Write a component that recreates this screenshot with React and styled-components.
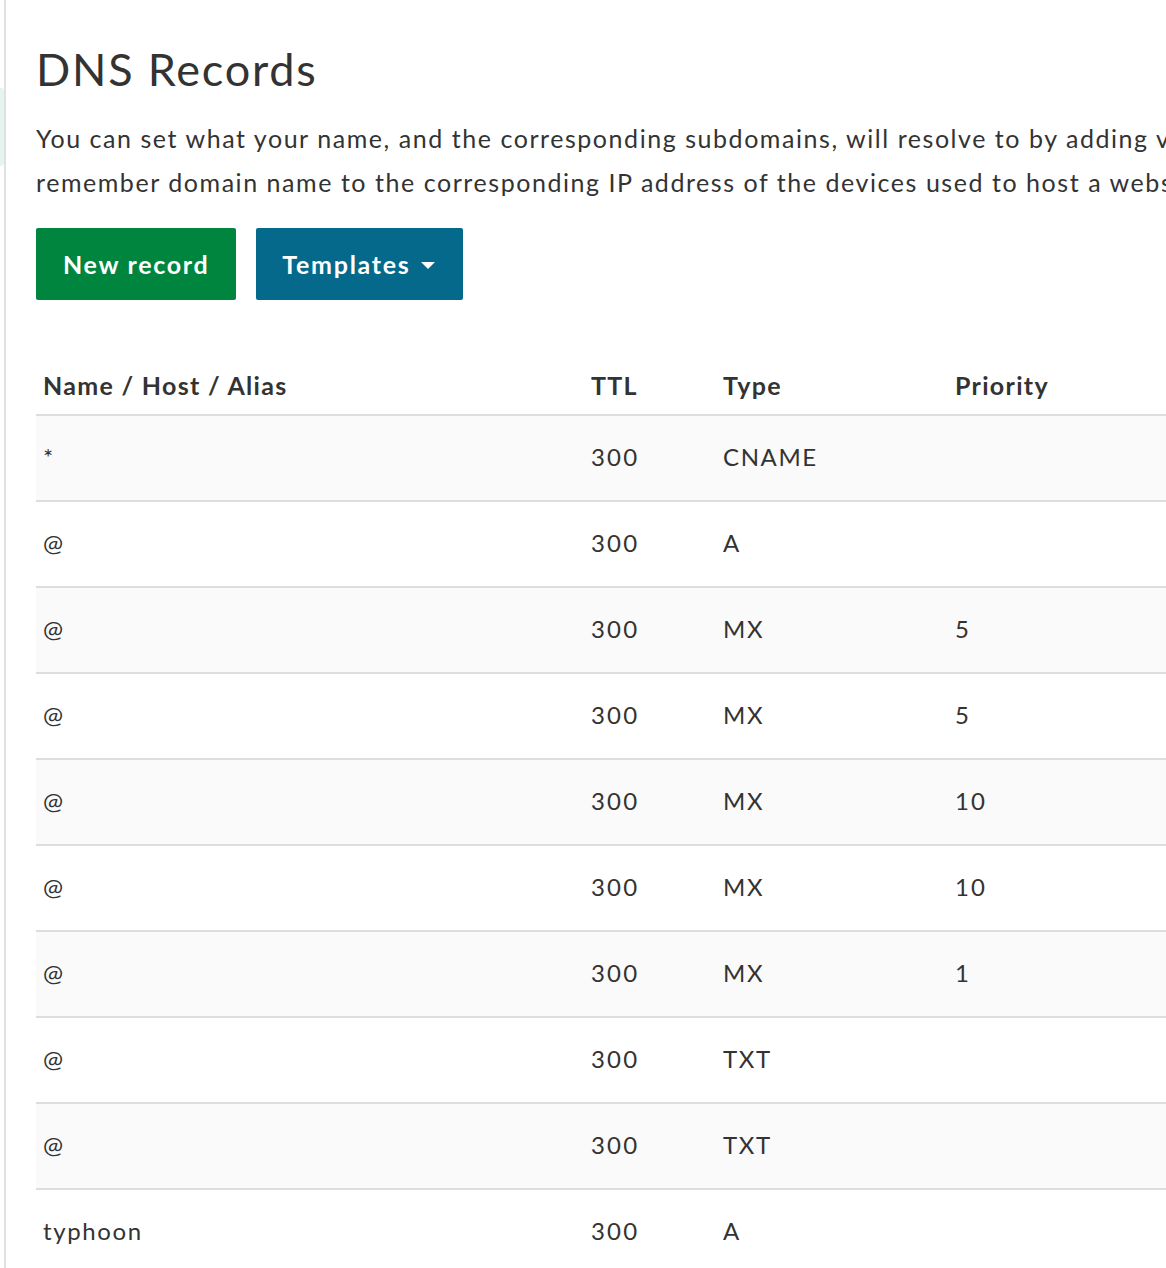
import React from 'react';
import styled, { createGlobalStyle } from 'styled-components';

const GlobalStyle = createGlobalStyle`
    html, body {
        margin: 0;
        padding: 0;
        background: #fff;
        overflow: hidden;
    }

    body {
        font-family: Lato, "Open Sans", sans-serif;
        color: #333;
        letter-spacing: 1.6px;
    }
`;

const Page = styled.div`
    display: flex;
    min-height: 1268px;
    width: 1500px;
`;

const Sidebar = styled.div`
    width: 4px;
    padding-top: 88px;
    border-right: 2px solid #e0e0e0;
    flex-shrink: 0;
`;

const ActiveItem = styled.div`
    height: 78px;
    background-color: #e6f4ee;
    border-radius: 0 3px 3px 0;
`;

const Main = styled.div`
    flex: 1;
    padding: 40px 0 0 30px;
`;

const Title = styled.h1`
    margin: 0 0 18px;
    font-size: 45px;
    font-weight: 400;
    line-height: 58px;
    letter-spacing: 1.8px;
    color: #333;
`;

const Intro = styled.p`
    margin: 0;
    font-size: 25px;
    line-height: 44px;
    letter-spacing: 1.55px;
    white-space: nowrap;
    color: #333;
`;

const Actions = styled.div`
    display: flex;
    gap: 20px;
    margin-top: 24px;
`;

const Button = styled.button`
    display: flex;
    align-items: center;
    gap: 11px;
    height: 72px;
    padding: 0 ${(p) => (p.$variant === 'blue' ? '28px 0 26px' : '27px')};
    border: none;
    border-radius: 2px;
    background-color: ${(p) => (p.$variant === 'blue' ? '#04698a' : '#00853f')};
    color: #fff;
    font-family: inherit;
    font-size: 25px;
    font-weight: 700;
    letter-spacing: 1.7px;
    cursor: pointer;
`;

const Caret = styled.span`
    width: 0;
    height: 0;
    border-left: 7px solid transparent;
    border-right: 7px solid transparent;
    border-top: 7px solid #fff;
    margin-top: 3px;
`;

const Table = styled.table`
    margin-top: 56px;
    width: 1300px;
    table-layout: fixed;
    border-collapse: collapse;
    font-size: 24px;
`;

const HeadCell = styled.th`
    text-align: left;
    font-size: 25px;
    font-weight: 700;
    letter-spacing: 1.3px;
    height: 58px;
    padding: 0 7px;
    vertical-align: middle;
    border-bottom: 2px solid #dddddd;
    width: ${(p) => p.$w || 'auto'};
`;

const Row = styled.tr`
    background-color: ${(p) => (p.$striped ? '#fafafa' : '#fff')};
    border-bottom: 2px solid #dddddd;
`;

const Cell = styled.td`
    height: 80px;
    padding: 0 7px 4px;
    vertical-align: middle;
    font-weight: 400;
    letter-spacing: ${(p) => (p.$wide ? '2.2px' : 'inherit')};
`;

const records = [
    { name: '*', ttl: 300, type: 'CNAME', priority: '' },
    { name: '@', ttl: 300, type: 'A', priority: '' },
    { name: '@', ttl: 300, type: 'MX', priority: 5 },
    { name: '@', ttl: 300, type: 'MX', priority: 5 },
    { name: '@', ttl: 300, type: 'MX', priority: 10 },
    { name: '@', ttl: 300, type: 'MX', priority: 10 },
    { name: '@', ttl: 300, type: 'MX', priority: 1 },
    { name: '@', ttl: 300, type: 'TXT', priority: '' },
    { name: '@', ttl: 300, type: 'TXT', priority: '' },
    { name: 'typhoon', ttl: 300, type: 'A', priority: '' },
];

export default function App() {
    return (
        <>
            <GlobalStyle />
            <Page>
                <Sidebar>
                    <ActiveItem />
                </Sidebar>

                <Main>
                    <Title>DNS Records</Title>

                    <Intro>
                        You can set what your name, and the corresponding subdomains, will resolve to by adding values below. DNS maps an easy to
                        <br />
                        remember domain name to the corresponding IP address of the devices used to host a website.
                    </Intro>

                    <Actions>
                        <Button>New record</Button>
                        <Button $variant="blue">
                            Templates
                            <Caret />
                        </Button>
                    </Actions>

                    <Table>
                        <thead>
                            <tr>
                                <HeadCell $w="534px">Name / Host / Alias</HeadCell>
                                <HeadCell $w="118px">TTL</HeadCell>
                                <HeadCell $w="218px">Type</HeadCell>
                                <HeadCell>Priority</HeadCell>
                            </tr>
                        </thead>
                        <tbody>
                            {records.map((r, i) => (
                                <Row key={i} $striped={i % 2 === 0}>
                                    <Cell>{r.name}</Cell>
                                    <Cell $wide>{r.ttl}</Cell>
                                    <Cell>{r.type}</Cell>
                                    <Cell $wide>{r.priority}</Cell>
                                </Row>
                            ))}
                        </tbody>
                    </Table>
                </Main>
            </Page>
        </>
    );
}
